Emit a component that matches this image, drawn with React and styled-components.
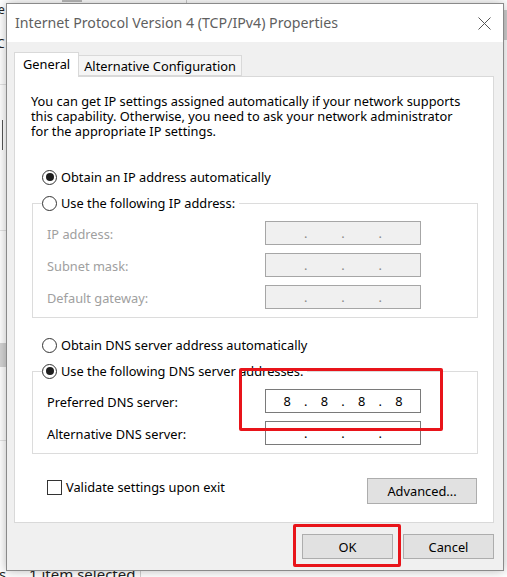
import React from "react";
import styled, { createGlobalStyle } from "styled-components";

const GlobalStyle = createGlobalStyle`
  html, body { margin: 0; padding: 0; background: #ffffff; }
  body { font-family: "Noto Sans", "Open Sans", sans-serif; }
  * { box-sizing: border-box; }
`;

const UI_SIZE = 12.8;

const Desktop = styled.div`
  position: relative;
  width: 507px;
  height: 577px;
  overflow: hidden;
  background: #ffffff;
`;

/* ---------- background window fragments ---------- */
const BgText = styled.span`
  position: absolute;
  left: ${(p) => p.$x}px;
  top: ${(p) => p.$y}px;
  font-family: "Noto Sans", sans-serif;
  font-size: ${(p) => p.$size || 12}px;
  color: #222;
  white-space: nowrap;
  line-height: 1;
`;

const BgBlock = styled.div`
  position: absolute;
  left: ${(p) => p.$x}px;
  top: ${(p) => p.$y}px;
  width: ${(p) => p.$w}px;
  height: ${(p) => p.$h}px;
  background: ${(p) => p.$bg || "#d9d9d9"};
`;

/* ---------- dialog ---------- */
const Dialog = styled.div`
  position: absolute;
  left: 6px;
  top: 3px;
  width: 498px;
  height: 568px;
  border: 1px solid #8a8a8a;
  background: #f0f0f0;
  box-shadow: 0 0 10px rgba(0, 0, 0, 0.28);
  display: flex;
  flex-direction: column;
  font-family: "Noto Sans", "Open Sans", sans-serif;
  font-size: ${UI_SIZE}px;
  color: #000;
`;

const TitleBar = styled.div`
  height: 38px;
  background: #ffffff;
  display: flex;
  align-items: center;
  justify-content: space-between;
  padding: 0 12px 2px 8px;
`;

const Title = styled.span`
  font-size: 14.2px;
  color: #5f5f5f;
`;

const CloseIcon = styled.svg`
  width: 13px;
  height: 13px;
  margin-top: 2px;
`;

const Body = styled.div`
  flex: 1;
  padding: 10px 0 0 7px;
  display: flex;
  flex-direction: column;
`;

const TabRow = styled.div`
  display: flex;
  align-items: flex-end;
  height: 24px;
  position: relative;
  z-index: 1;
`;

const Tab = styled.div`
  height: ${(p) => (p.$active ? 25 : 21)}px;
  margin-bottom: ${(p) => (p.$active ? -1 : 0)}px;
  padding: 0 ${(p) => (p.$active ? 8 : 5)}px;
  padding-bottom: ${(p) => (p.$active ? 2 : 0)}px;
  display: flex;
  align-items: center;
  background: ${(p) => (p.$active ? "#ffffff" : "#f5f5f5")};
  border: 1px solid #d9d9d9;
  border-bottom: ${(p) => (p.$active ? "none" : "1px solid #d9d9d9")};
  border-left: ${(p) => (p.$first ? "1px solid #d9d9d9" : "none")};
  white-space: nowrap;
`;

const Panel = styled.div`
  width: 480px;
  height: 447px;
  background: #ffffff;
  border: 1px solid #d9d9d9;
  padding: 17px 0 0 16px;
  display: flex;
  flex-direction: column;
`;

const Paragraph = styled.p`
  margin: 0;
  width: 440px;
  line-height: 15px;
`;

const RadioRow = styled.label`
  display: flex;
  align-items: center;
  height: 20px;
  margin-left: 11px;
  margin-top: ${(p) => p.$mt || 0}px;
  gap: 4px;
`;

const RadioCircle = styled.span`
  width: 15px;
  height: 15px;
  border-radius: 50%;
  border: 1px solid #333333;
  background: #ffffff;
  display: inline-flex;
  align-items: center;
  justify-content: center;
  flex: none;
  &::after {
    content: "";
    width: 8px;
    height: 8px;
    border-radius: 50%;
    background: ${(p) => (p.$checked ? "#1e1e1e" : "transparent")};
  }
`;

const Group = styled.fieldset`
  margin: ${(p) => p.$mt || 0}px 0 0 1px;
  width: 446px;
  border: 1px solid #dcdcdc;
  padding: 8px 0 8px 14px;
  display: grid;
  grid-template-columns: 218px 156px;
  row-gap: 8px;
  align-items: center;
`;

const Legend = styled.legend`
  padding: 0 4px 0 0;
  margin-left: -5px;
  height: 20px;
  display: flex;
  align-items: center;
  gap: 4px;
`;

const FieldLabel = styled.span`
  color: ${(p) => (p.$disabled ? "#a0a0a0" : "#000000")};
  padding-top: 2px;
`;

const IpBox = styled.div`
  height: 24px;
  border: 1px solid ${(p) => (p.$disabled ? "#a6a6a6" : "#7a7a7a")};
  background: ${(p) => (p.$disabled ? "#f0f0f0" : "#ffffff")};
  display: flex;
  align-items: center;
  padding: 0 4px;
  color: ${(p) => (p.$disabled ? "#a0a0a0" : "#000")};
`;

const Octet = styled.span`
  flex: 1;
  text-align: center;
`;

const Dot = styled.span`
  width: 3px;
  display: flex;
  justify-content: center;
  color: ${(p) => (p.$disabled ? "#8a8a8a" : "#000")};
`;

const BottomRow = styled.div`
  display: flex;
  justify-content: space-between;
  align-items: flex-start;
  margin-top: 24px;
  width: 446px;
`;

const CheckRow = styled.label`
  display: flex;
  align-items: center;
  gap: 4px;
  margin-left: 16px;
  margin-top: 1px;
  height: 16px;
`;

const CheckBox = styled.span`
  width: 15px;
  height: 15px;
  border: 1px solid #333333;
  background: #ffffff;
  flex: none;
`;

const Button = styled.button`
  width: ${(p) => p.$w}px;
  height: ${(p) => p.$h || 25}px;
  background: #e1e1e1;
  border: 1px solid #adadad;
  font-family: "Noto Sans", "Open Sans", sans-serif;
  font-size: ${UI_SIZE}px;
  color: #000;
  padding: 0;
  display: flex;
  align-items: center;
  justify-content: center;
`;

const Footer = styled.div`
  display: flex;
  justify-content: flex-end;
  gap: 10px;
  width: 480px;
  margin-top: 11px;
`;

const Highlight = styled.div`
  position: absolute;
  left: ${(p) => p.$x}px;
  top: ${(p) => p.$y}px;
  width: ${(p) => p.$w}px;
  height: ${(p) => p.$h}px;
  border: 3px solid #e8141a;
  border-radius: 2px;
  pointer-events: none;
`;

function IpField({ values, disabled }) {
  const v = values || ["", "", "", ""];
  return (
    <IpBox $disabled={disabled}>
      <Octet>{v[0]}</Octet>
      <Dot $disabled={disabled}>.</Dot>
      <Octet>{v[1]}</Octet>
      <Dot $disabled={disabled}>.</Dot>
      <Octet>{v[2]}</Octet>
      <Dot $disabled={disabled}>.</Dot>
      <Octet>{v[3]}</Octet>
    </IpBox>
  );
}

export default function App() {
  return (
    <>
      <GlobalStyle />
      <Desktop>
        {/* background window fragments */}
        <BgText $x={-2} $y={4}>e</BgText>
        <BgText $x={-3} $y={38}>C</BgText>
        <BgBlock $x={0} $y={84} $w={6} $h={1} $bg="#e3e3e3" />
        <BgBlock $x={2} $y={120} $w={1} $h={30} $bg="#555" />
        <BgBlock $x={0} $y={230} $w={6} $h={1} $bg="#e3e3e3" />
        <BgBlock $x={0} $y={343} $w={6} $h={24} $bg="#d4d4d4" />
        <BgBlock $x={0} $y={440} $w={6} $h={1} $bg="#e3e3e3" />
        <BgBlock $x={503} $y={10} $w={4} $h={30} $bg="#cfcfcf" />
        <BgBlock $x={62} $y={0} $w={20} $h={2} $bg="#bbb" />
        <BgBlock $x={186} $y={0} $w={1} $h={3} $bg="#ccc" />
        <BgBlock $x={140} $y={570} $w={1} $h={7} $bg="#d0d0d0" />
        <BgText $x={29} $y={567} $size={15}>1 item selected</BgText>
        <BgText $x={-1} $y={567} $size={15}>s</BgText>

        <Dialog>
          <TitleBar>
            <Title>Internet Protocol Version 4 (TCP/IPv4) Properties</Title>
            <CloseIcon viewBox="0 0 13 13">
              <path d="M0.5 0.5 L12.5 12.5 M12.5 0.5 L0.5 12.5" stroke="#555" strokeWidth="1" fill="none" />
            </CloseIcon>
          </TitleBar>
          <Body>
            <TabRow>
              <Tab $active $first>General</Tab>
              <Tab>Alternative Configuration</Tab>
            </TabRow>
            <Panel>
              <Paragraph>
                You can get IP settings assigned automatically if your network supports
                this capability. Otherwise, you need to ask your network administrator
                for the appropriate IP settings.
              </Paragraph>

              <RadioRow $mt={28}>
                <RadioCircle $checked />
                Obtain an IP address automatically
              </RadioRow>

              <Group $mt={6}>
                <Legend>
                  <RadioCircle />
                  Use the following IP address:
                </Legend>
                <FieldLabel $disabled>IP address:</FieldLabel>
                <IpField disabled />
                <FieldLabel $disabled>Subnet mask:</FieldLabel>
                <IpField disabled />
                <FieldLabel $disabled>Default gateway:</FieldLabel>
                <IpField disabled />
              </Group>

              <RadioRow $mt={17}>
                <RadioCircle />
                Obtain DNS server address automatically
              </RadioRow>

              <Group $mt={6}>
                <Legend>
                  <RadioCircle $checked />
                  Use the following DNS server addresses:
                </Legend>
                <FieldLabel>Preferred DNS server:</FieldLabel>
                <IpField values={["8", "8", "8", "8"]} />
                <FieldLabel>Alternative DNS server:</FieldLabel>
                <IpField />
              </Group>

              <BottomRow>
                <CheckRow>
                  <CheckBox />
                  Validate settings upon exit
                </CheckRow>
                <Button $w={110} $h={26}>Advanced...</Button>
              </BottomRow>
            </Panel>
            <Footer>
              <Button $w={91}>OK</Button>
              <Button $w={91}>Cancel</Button>
            </Footer>
          </Body>
        </Dialog>

        <Highlight $x={239} $y={368} $w={204} $h={63} />
        <Highlight $x={293} $y={524} $w={108} $h={43} />
      </Desktop>
    </>
  );
}
